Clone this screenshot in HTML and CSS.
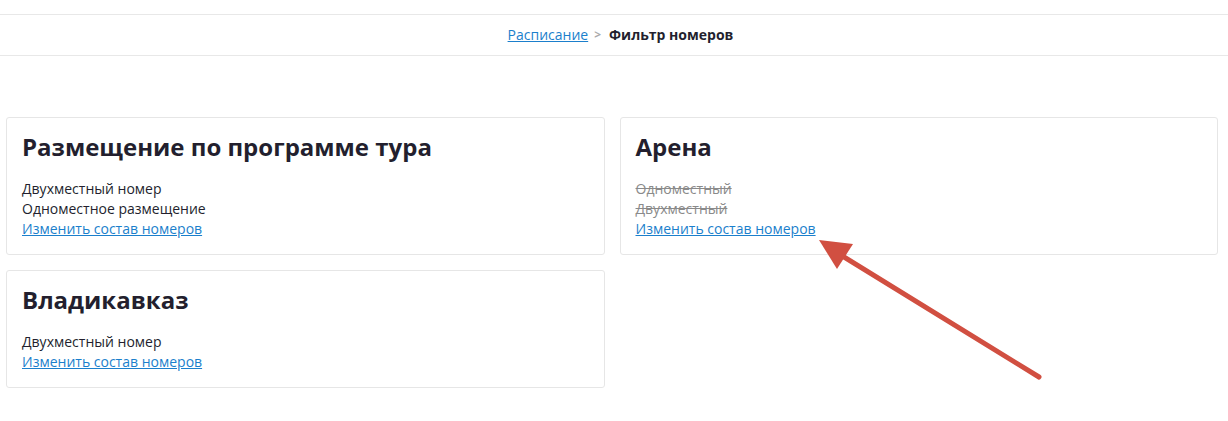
FILE: index.html
```html
<!DOCTYPE html>
<html>
  <head>
    <link rel="stylesheet" href="styles.css">
  </head>
  <body>
    <div class="topbar"></div>

    <div class="breadcrumbs">
      <a href="/schedule">Расписание</a>
      <span class="sep">&gt;</span>
      <span class="current">Фильтр номеров</span>
    </div>

    <div class="hotels">
      <div class="column">
        <div class="card">
          <h2>Размещение по программе тура</h2>
          <div class="room">Двухместный номер</div>
          <div class="room">Одноместное размещение</div>
          <a class="change" href="#">Изменить состав номеров</a>
        </div>
        <div class="card">
          <h2>Владикавказ</h2>
          <div class="room">Двухместный номер</div>
          <a class="change" href="#">Изменить состав номеров</a>
        </div>
      </div>

      <div class="column">
        <div class="card">
          <h2>Арена</h2>
          <div class="room disabled">Одноместный</div>
          <div class="room disabled">Двухместный</div>
          <a class="change" href="#">Изменить состав номеров</a>
        </div>
      </div>
    </div>

    <!-- annotation arrow -->
    <svg class="arrow" width="1228" height="421" viewBox="0 0 1228 421">
      <line x1="1039" y1="377" x2="836" y2="252" stroke="#d14f41" stroke-width="5" stroke-linecap="round" />
      <polygon points="819,240 853,244 837,269" fill="#d14f41" />
    </svg>
  </body>
</html>
```

FILE: styles.css
```css
body {
  font-family: "Open Sans", Arial, sans-serif;
  margin: 0;
  padding: 0;
  background-color: white;
  color: #231f2e;
  font-size: 14px;
  line-height: 20px;
  position: relative;
}

a {
  color: #1b7fcc;
}

.topbar {
  height: 14px;
  border-bottom: 1px solid #e8e8e8;
}

.breadcrumbs {
  height: 40px;
  border-bottom: 1px solid #e8e8e8;
  display: flex;
  align-items: center;
  justify-content: center;
  gap: 6px;
  padding-left: 13px;
}

.breadcrumbs .sep {
  color: #aaaaaa;
  font-weight: bold;
  font-size: 12px;
  margin-right: 2px;
}

.breadcrumbs .current {
  font-weight: bold;
}

.hotels {
  display: flex;
  gap: 15px;
  padding: 61px 10px 0 6px;
}

.column {
  flex: 1;
  display: flex;
  flex-direction: column;
  gap: 15px;
}

.card {
  border: 1px solid #e6e6e6;
  border-radius: 3px;
  padding: 14px 15px 15px;
}

.card h2 {
  font-size: 24px;
  line-height: 30px;
  font-weight: bold;
  margin: 0 0 17px;
}

.room.disabled {
  color: #8a8a8a;
  text-decoration: line-through;
}

.change {
  display: inline-block;
}

.arrow {
  position: absolute;
  left: 0;
  top: 0;
  pointer-events: none;
}
```
